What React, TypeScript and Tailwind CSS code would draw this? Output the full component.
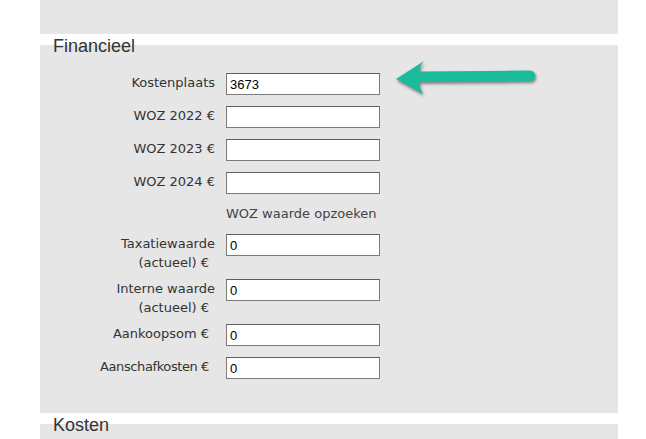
import React from "react";

type Field = { label: string[]; value?: string; pad?: boolean };

const fields: Field[] = [
  { label: ["Kostenplaats"], value: "3673" },
  { label: ["WOZ 2022 €"] },
  { label: ["WOZ 2023 €"] },
  { label: ["WOZ 2024 €"] },
];

const valueFields: Field[] = [
  { label: ["Taxatiewaarde", "(actueel) €"], value: "0", pad: true },
  { label: ["Interne waarde", "(actueel) €"], value: "0", pad: true },
  { label: ["Aankoopsom €"], value: "0", pad: true },
  { label: ["Aanschafkosten €"], value: "0", pad: true },
];

function Row({ field }: { field: Field }) {
  const twoLines = field.label.length > 1;
  return (
    <div className={`flex items-start gap-[11px] ${twoLines ? "h-[34px]" : "h-[22px]"}`}>
      <div
        className="w-[175px] shrink-0 text-right text-[13px] leading-[19px] text-[#333]"
        style={{ fontFamily: '"DejaVu Sans", sans-serif' }}
      >
        {field.label.map((l) => (
          <div
            key={l}
            className={`${field.pad && l.endsWith("€") ? "pr-[6px]" : ""} ${
              l.length > 15 ? "tracking-[-0.4px]" : ""
            }`}
          >
            {l}
          </div>
        ))}
      </div>
      <input
        readOnly
        value={field.value ?? ""}
        className="w-[154px] h-[22px] shrink-0 bg-white border border-[#7b7b7b] border-t-[#5e5e5e] px-[3px] text-[13px] text-black outline-none"
        style={{ fontFamily: '"Liberation Sans", Arial, sans-serif' }}
      />
    </div>
  );
}

function SectionTitle({ children }: { children: React.ReactNode }) {
  return (
    <div
      className="relative pl-[13px] pt-[2px] -mb-[11px] text-[18px] leading-[20px] text-[#333]"
      style={{ fontFamily: '"Liberation Sans", Arial, sans-serif' }}
    >
      {children}
    </div>
  );
}

function Arrow() {
  return (
    <svg
      width={150}
      height={45}
      viewBox="0 0 150 45"
      className="absolute left-[390px] top-[55px] drop-shadow-[1px_2px_1.5px_rgba(0,0,0,0.45)]"
    >
      <path
        d="M6 24 L34 6 Q29 11 30 16.5 L140 15.5 A5.2 5.2 0 0 1 140 26 L29.5 27 Q29 33 33 39 Z"
        fill="#1bbc9b"
      />
    </svg>
  );
}

export default function App() {
  return (
    <div className="relative w-[646px] h-[439px] overflow-hidden bg-white">
      <div className="mx-[40px] w-[578px]">
        <div className="h-[34px] bg-[#e6e6e6]" />

        <SectionTitle>Financieel</SectionTitle>
        <div className="h-[368px] bg-[#e6e6e6] pt-[28px]">
          <div className="flex flex-col gap-[11px]">
            {fields.map((f) => (
              <Row key={f.label.join(" ")} field={f} />
            ))}
            <div
              className="h-[18px] pl-[186px] text-[13px] leading-[18px] text-[#444]"
              style={{ fontFamily: '"DejaVu Sans", sans-serif' }}
            >
              WOZ waarde opzoeken
            </div>
            {valueFields.map((f) => (
              <Row key={f.label.join(" ")} field={f} />
            ))}
          </div>
        </div>

        <SectionTitle>Kosten</SectionTitle>
        <div className="h-[40px] bg-[#e6e6e6]" />
      </div>
      <Arrow />
    </div>
  );
}
